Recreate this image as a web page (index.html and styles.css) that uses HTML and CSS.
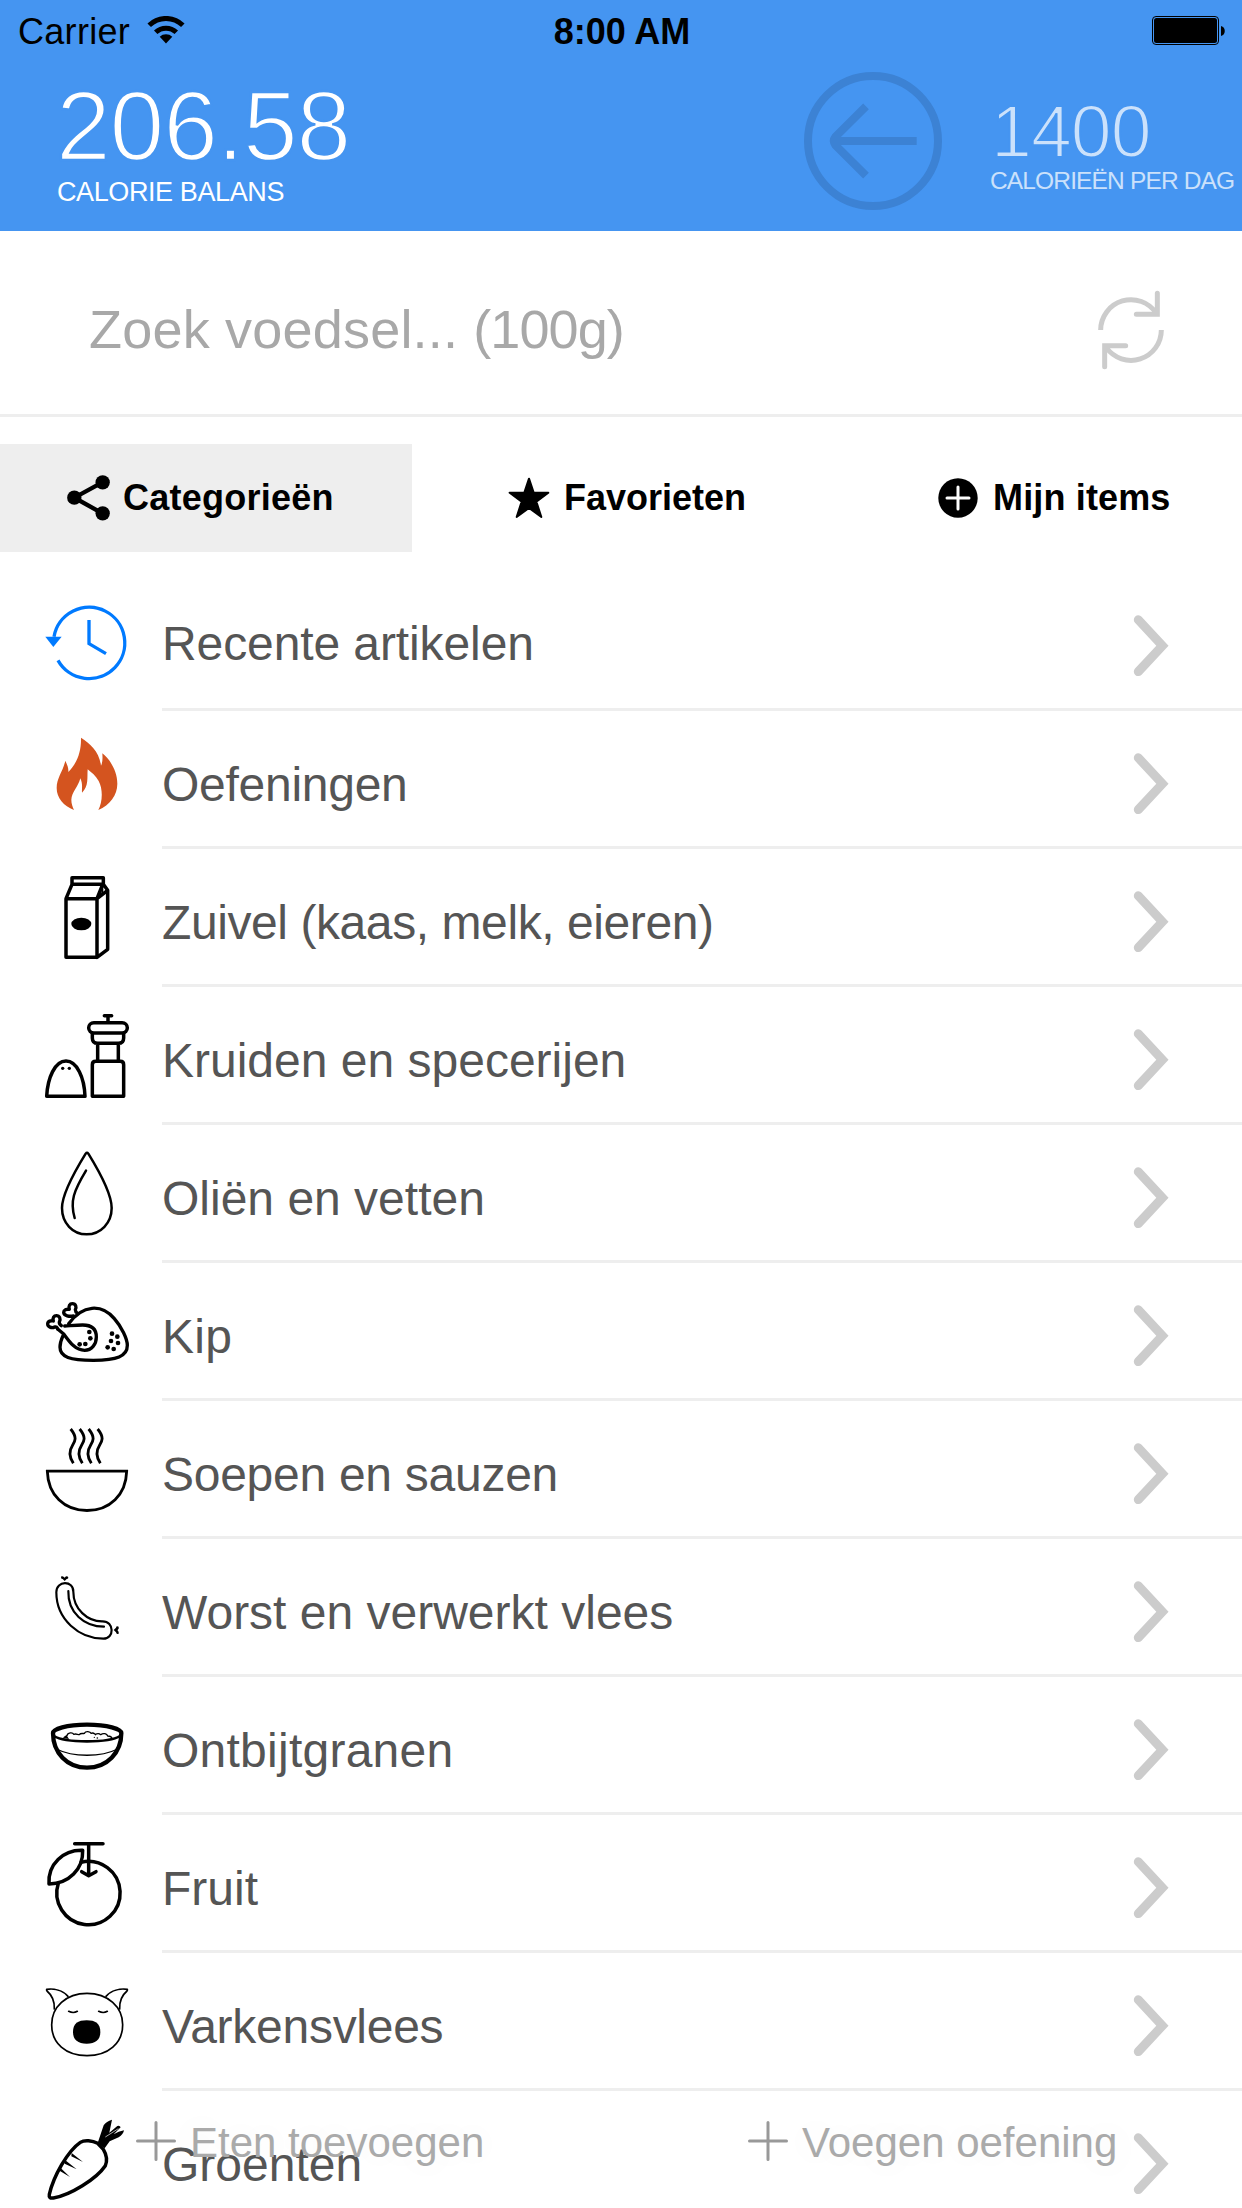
FILE: index.html
```html
<!DOCTYPE html>
<html lang="nl">
<head>
<meta charset="utf-8">
<title>Calorie balans</title>
<link rel="stylesheet" href="styles.css">
</head>
<body>
<header class="header">
  <div class="status">
    <div class="carrier">Carrier
      <svg class="wifi" width="38" height="28" viewBox="0 0 38 28"><g fill="none" stroke="#000" stroke-width="5"><path d="M2.2 9.3a24 24 0 0 1 33.6 0"/><path d="M8.7 16.3a15 15 0 0 1 20.6 0"/></g><path d="M19 27.5l-6.300-6.800a9.500 9.500 0 0 1 12.600 0z"/></svg>
    </div>
    <div class="time">8:00 AM</div>
    <svg class="battery" width="74" height="30" viewBox="0 0 74 30"><rect x=".5" y=".5" width="66" height="28" rx="3.500" fill="none" stroke="#000"/><rect x="2" y="2" width="63" height="25" rx="2.500"/><path d="M69 10c5 1 5 9 0 10z"/></svg>
  </div>
  <div class="summary">
    <div class="balance">
      <div class="balance-value">206.58</div>
      <div class="balance-label">CALORIE BALANS</div>
    </div>
    <svg class="back" width="138" height="138" viewBox="0 0 414 414"><g fill="none" stroke="#3c82d4" stroke-width="24"><circle cx="207" cy="207" r="195"/><path d="M338 207H102M186 103L94 195q-9 12 0 24l92 92"/></g></svg>
    <div class="goal">
      <div class="goal-value">1400</div>
      <div class="goal-label">CALORIEËN PER DAG</div>
    </div>
  </div>
</header>

<div class="search">
  <div class="search-text"><span class="prompt">Zoek voedsel...</span> <span class="unit">(100g)</span></div>
  <svg class="refresh" width="100" height="100" viewBox="0 0 300 300"><g fill="none" stroke="#ccc" stroke-width="15"><path d="M47 150a91 91 0 0 1 167-50M229 150a91 91 0 0 1-165 53"/><path stroke-linecap="round" d="M217 40v63h-63M59 260v-63h63"/></g></svg>
</div>

<nav class="tabs">
  <div class="tab tab-categories active">
    <svg width="43" height="46" viewBox="0 0 129 138"><path d="M106 22L22 68l84 47" fill="none" stroke="#000" stroke-width="13"/><circle cx="107" cy="22" r="21.500"/><circle cx="22" cy="68" r="21.500"/><circle cx="107" cy="115" r="21.500"/></svg>
    <span>Categorieën</span>
  </div>
  <div class="tab tab-favorites">
    <svg width="42" height="42" viewBox="0 0 126 126"><path d="M63 5l14 42h44L85 74l15 46-37-27-37 27 15-46L5 47h44z" stroke="#000" stroke-width="6" stroke-linejoin="round"/></svg>
    <span>Favorieten</span>
  </div>
  <div class="tab tab-mine">
    <svg width="40" height="40" viewBox="0 0 40 40"><circle cx="20" cy="20" r="19.700"/><path d="M20 9v22M9 20h22" stroke="#fff" stroke-width="3" stroke-linecap="round"/></svg>
    <span>Mijn items</span>
  </div>
</nav>

<main class="list">
  <div class="row first">
    <svg class="icon" viewBox="0 -21 396 405"><g fill="none" stroke="#007aff" stroke-width="10"><path d="M72 170a107 107 0 1 1 12 71"/><path d="M177 120v71l51 30"/></g><path d="M46 170h49l-25 31z" fill="#007aff"/></svg>
    <div class="cell"><span>Recente artikelen</span><svg class="chevron" viewBox="0 0 36 64"><path d="M5.300 5.800l24.100 25.900L5.300 57.600"/></svg></div>
  </div>
  <div class="row">
    <svg class="icon" viewBox="0 393 396 405"><path fill="#d4541f" d="M153 473c28 18 55 42 60 84 5-10 5-22 4-37 25 20 45 55 45 91 0 34-22 64-57 79 12-22 15-61 1-87-8-15-22-26-33-35-2 25 4 50-17 70-1-15 3-25-5-43-6 25-26 42-27 64 0 12 4 22 8 31-31-12-52-36-52-66 0-30 19-50 26-82 5 12 10 20 9 34 25-26 39-58 38-103z"/></svg>
    <div class="cell"><span class="snug">Oefeningen</span><svg class="chevron" viewBox="0 0 36 64"><path d="M5.300 5.800l24.100 25.900L5.300 57.600"/></svg></div>
  </div>
  <div class="row">
    <svg class="icon" viewBox="0 -3 396 405"><g class="line w10"><path d="M108 146h93v176h-93zM108 146l18-43h92l-17 43M126 103V83h94v20M201 322l32-24V121l-32 25M220 103l13 18"/><path stroke-width="6" d="M217 108v22"/></g><ellipse cx="154" cy="222" rx="30" ry="19"/></svg>
    <div class="cell"><span class="tight">Zuivel (kaas, melk, eieren)</span><svg class="chevron" viewBox="0 0 36 64"><path d="M5.300 5.800l24.100 25.900L5.300 57.600"/></svg></div>
  </div>
  <div class="row">
    <svg class="icon" viewBox="0 411 396 405"><g class="line w10"><path d="M50 739c3-56 25-106 58-106s55 50 57 106zM187 739v-95q0-10 10-10h74q10 0 10 10v95zM203 583v50M265 583v50M187 550v14q0 16 16 16h62q16 0 16-16v-14M223 497h22M234 498v18"/><rect x="176" y="518" width="116" height="31" rx="15.500"/></g><circle cx="98" cy="655" r="5"/><circle cx="118" cy="655" r="5"/></svg>
    <div class="cell"><span>Kruiden en specerijen</span><svg class="chevron" viewBox="0 0 36 64"><path d="M5.300 5.800l24.100 25.900L5.300 57.600"/></svg></div>
  </div>
  <div class="row">
    <svg class="icon" viewBox="0 -15 396 405"><g class="line w7"><path d="M167 71q4-5 8 0c24 39 70 116 70 163 0 45-33 79-75 79s-74-34-74-79c0-47 47-124 71-163z"/><path d="M168 122c-36 60-49 91-34 142"/></g></svg>
    <div class="cell"><span>Oliën en vetten</span><svg class="chevron" viewBox="0 0 36 64"><path d="M5.300 5.800l24.100 25.900L5.300 57.600"/></svg></div>
  </div>
  <div class="row">
    <svg class="icon" viewBox="0 399 396 405"><g class="line w9"><path d="M116 581c42-58 99-60 137-15 22 25 39 61 39 80 0 34-32 44-102 45-70 0-100-10-100-39 0-13 4-24 9-35"/><path d="M83 597l19 16c19 26 35 48 62 48 21 0 35-18 35-40 0-27-18-36-41-36-18 0-37 2-54 3"/><path d="M83 597c-4-7 0-6-9-6-9 5-21-1-21-9 0-9 10-11 17-9-3-9 2-16 9-16 10 0 14 10 9 19-1 5 1 7 6 11M130 558c-11 2-29 0-29-11 0-8 8-10 17-9-3-10 1-17 9-17 11 0 13 11 9 18 0 7 2 8 7 11"/></g><g><circle cx="178" cy="606" r="7"/><circle cx="181" cy="625" r="7"/><circle cx="166" cy="642" r="7"/><circle cx="149" cy="643" r="7"/><circle cx="246" cy="611" r="7"/><circle cx="262" cy="620" r="7"/><circle cx="243" cy="633" r="7"/><circle cx="264" cy="639" r="7"/><circle cx="233" cy="652" r="7"/><circle cx="251" cy="657" r="7"/></g></svg>
    <div class="cell"><span class="loose">Kip</span><svg class="chevron" viewBox="0 0 36 64"><path d="M5.300 5.800l24.100 25.900L5.300 57.600"/></svg></div>
  </div>
  <div class="row">
    <svg class="icon" viewBox="0 3 396 405"><g class="line w8 butt"><path d="M52 213.500h238c-2 71-51 118-119 118S54 285 52 213.500z"/><path d="M122 87c20 25 14 36 5 50-10 15-10 33 3 53M149 87c20 25 14 36 5 50-10 15-10 33 3 53M176 87c20 25 14 36 5 50-10 15-10 33 3 53M203 87c20 25 14 36 5 50-10 15-10 33 3 53"/></g></svg>
    <div class="cell"><span class="snug">Soepen en sauzen</span><svg class="chevron" viewBox="0 0 36 64"><path d="M5.300 5.800l24.100 25.900L5.300 57.600"/></svg></div>
  </div>
  <div class="row">
    <svg class="icon" viewBox="0 417 396 405"><g class="line w6"><path d="M79 577c0-37 52-36 51-2 0 52 42 90 88 89 35 0 36 52 2 52-72 0-141-57-141-139z"/><path d="M115 573c-2 65 48 107 107 107"/></g><path d="M104 543l-6-6q-7 0-4-8 6-2 10 4 5-7 10-3 3 6-4 7zM251 690l7-7q1-7 8-3v6q-6 4 0 9v6q-7 3-8-4z"/></svg>
    <div class="cell"><span>Worst en verwerkt vlees</span><svg class="chevron" viewBox="0 0 36 64"><path d="M5.300 5.800l24.100 25.900L5.300 57.600"/></svg></div>
  </div>
  <div class="row">
    <svg class="icon" viewBox="0 -9 396 405"><g class="line"><path stroke-width="13" d="M69 159c0-12 40-25 102-25s103 13 103 25c0 59-43 104-103 104S69 218 69 159z"/><path stroke-width="8" d="M72 168c22 14 55 16 99 16s77-2 99-16"/><path stroke-width="4" d="M79 207c50 25 134 25 184 0M101 175c2-7 8-5 10-8 2-10 17-11 20-4 8-3 11 1 17 1 4-6 10-2 15-4 4-8 18-6 20 0 7-3 10 1 13 3 6-3 12-3 16 1 8-6 19-3 21 4 7 0 12 3 13 8"/></g><path d="M101 175l8-10 8 12z"/><circle cx="193" cy="172" r="2"/><circle cx="202" cy="174" r="2.500"/><circle cx="196" cy="167" r="1"/></svg>
    <div class="cell"><span class="loose">Ontbijtgranen</span><svg class="chevron" viewBox="0 0 36 64"><path d="M5.300 5.800l24.100 25.900L5.300 57.600"/></svg></div>
  </div>
  <div class="row">
    <svg class="icon" viewBox="0 405 396 405"><g class="line w10"><path d="M153 547a95 95 0 1 1-68 63"/><path d="M134 491h85M176 491v92M155 575l21 12 22-12M158 511c-58-2-105 42-101 101 60-1 103-45 101-101z"/></g></svg>
    <div class="cell"><span>Fruit</span><svg class="chevron" viewBox="0 0 36 64"><path d="M5.300 5.800l24.100 25.900L5.300 57.600"/></svg></div>
  </div>
  <div class="row">
    <svg class="icon" viewBox="0 -21 396 405"><g class="line w5"><path d="M171 100c63 0 107 41 107 94 0 56-43 93-107 93S65 250 65 194c0-53 43-94 106-94z"/><path d="M114 109c-16-18-42-24-64-21 0 2-1 3 1 5 19 16 23 33 22 54M228 109c16-18 42-24 64-21 0 2 1 3-1 5-19 16-23 33-22 54M116 154q14 7 26 0M206 154q14 7 26 0"/></g><path d="M170 181c26 0 41 9 41 35 0 24-15 35-41 35s-41-11-41-35c0-26 15-35 41-35z"/></svg>
    <div class="cell"><span class="snug">Varkensvlees</span><svg class="chevron" viewBox="0 0 36 64"><path d="M5.300 5.800l24.100 25.900L5.300 57.600"/></svg></div>
  </div>
  <div class="row">
    <svg class="icon" viewBox="0 393 396 405"><path class="line w10" d="M203 550c-16-9-40-11-52-3-38 26-80 101-93 156-2 10 3 12 12 11 51-9 129-57 156-97 7-17 3-34-6-49z"/><path d="M203 549l18-53q8-12 25-17l-8 39 24-20q7-3 10 4l-21 21q14-9 31-12-2 12-16 21l-27 12-15 21zM125 579l34 27-35-17zM106 601l34 27-36-17zM92 624l28 27-34-20z"/><path d="M226 531l39-25" stroke="#fff" stroke-width="2"/></svg>
    <div class="cell"><span>Groenten</span><svg class="chevron" viewBox="0 0 36 64"><path d="M5.300 5.800l24.100 25.900L5.300 57.600"/></svg></div>
  </div>
</main>

<footer class="actions">
  <div class="action"><svg width="40" height="40" viewBox="0 0 40 40"><path d="M20 1.500v37M1.500 20h37"/></svg><span>Eten toevoegen</span></div>
  <div class="action"><svg width="40" height="40" viewBox="0 0 40 40"><path d="M20 1.500v37M1.500 20h37"/></svg><span>Voegen oefening</span></div>
</footer>
</body>
</html>
```
FILE: styles.css
```css
* { box-sizing: border-box; }
body {
  margin: 0;
  position: relative;
  width: 1242px;
  height: 2208px;
  overflow: hidden;
  background: #fff;
  color: #000;
  font-family: "Liberation Sans", Arial, sans-serif;
  white-space: nowrap;
}
svg { display: block; flex: none; }

.header { height: 231px; background: #4595f1; color: #fff; }
.status {
  display: grid;
  grid-template-columns: 1fr auto 1fr;
  height: 63px;
  padding: 0 16px 0 18px;
  color: #000;
  font-size: 36px;
  line-height: 63px;
}
.carrier { display: flex; gap: 17px; letter-spacing: .3px; }
.wifi { margin-top: 16px; }
.time { font-weight: 700; font-size: 36px; }
.battery { justify-self: end; margin-top: 16px; }
.summary { display: flex; align-items: flex-start; }
.balance { width: 747px; padding: 15px 0 0 56px; }
.balance-value {
  font-size: 98.500px;
  line-height: 96px;
  letter-spacing: -1.200px;
  -webkit-text-stroke: 2.400px #4595f1;
}
.balance-label { margin: 3px 0 0 1px; font-size: 27px; line-height: 30px; letter-spacing: -.4px; }
.back { margin: 9px 0 0 57px; }
.goal { margin: 33px 0 0 48px; color: #cbe1fb; }
.goal-value {
  padding-left: 1px;
  font-size: 73.500px;
  line-height: 72px;
  letter-spacing: -1px;
  -webkit-text-stroke: 2px #4595f1;
}
.goal-label { margin-top: -1px; font-size: 24.500px; line-height: 28px; letter-spacing: -.85px; }

.search {
  display: flex;
  justify-content: space-between;
  height: 186px;
  padding: 14px 57px 0 89px;
  border-bottom: 3px solid #eee;
}
.search-text { color: #a8a8a8; font-size: 54px; line-height: 169px; }
.prompt { letter-spacing: .2px; }
.unit { letter-spacing: -.9px; }
.refresh { margin-top: 35px; }

.tabs {
  display: grid;
  grid-template-columns: 412px 416px 414px;
  height: 108px;
  margin-top: 27px;
  font-size: 36px;
  font-weight: 700;
}
.tab { display: flex; align-items: center; }
.active { background: #eee; }
.tab-categories { gap: 13px; padding-left: 67px; letter-spacing: .25px; }
.tab-favorites { gap: 14px; padding-left: 96px; }
.tab-mine { gap: 15px; padding-left: 110px; letter-spacing: .15px; }

.list { margin-top: 21px; }
.row { display: flex; height: 138px; padding-left: 30px; }
.icon { width: 132px; height: 135px; }
.cell {
  display: flex;
  flex: 1;
  justify-content: space-between;
  padding: 12px 73px 0 0;
  border-bottom: 3px solid #eee;
  color: #555;
  font-size: 48px;
  line-height: 123px;
}
.first .cell { padding-top: 9px; letter-spacing: -.1px; }
.tight { letter-spacing: -.42px; }
.snug { letter-spacing: -.27px; }
.loose { letter-spacing: .25px; }
.chevron { width: 36px; height: 64px; margin-top: 29px; }
.first .chevron { margin-top: 32px; }
.chevron path { fill: none; stroke: #ccc; stroke-width: 9px; stroke-linecap: round; }
.line { fill: none; stroke: #000; stroke-linecap: round; stroke-linejoin: round; }
.w10 { stroke-width: 10.500px; }
.w9 { stroke-width: 10px; }
.w8 { stroke-width: 8.500px; }
.w7 { stroke-width: 7.500px; }
.w6 { stroke-width: 6.500px; }
.w5 { stroke-width: 5px; }
.butt { stroke-linecap: butt; stroke-linejoin: miter; }

/* Floating actions over the scrolling list */
.actions {
  position: absolute;
  left: 0;
  bottom: 0;
  display: grid;
  grid-template-columns: 612px 630px;
  width: 1242px;
  height: 132px;
  color: #aaa;
  font-size: 42px;
  text-shadow: 0 0 36px rgba(0, 0, 0, .07);
}
.action { display: flex; align-items: center; gap: 14px; padding: 1px 0 0 136px; }
.action svg { margin-top: -4px; }
.action path { fill: none; stroke: #999; stroke-width: 3px; stroke-linecap: round; }
```
